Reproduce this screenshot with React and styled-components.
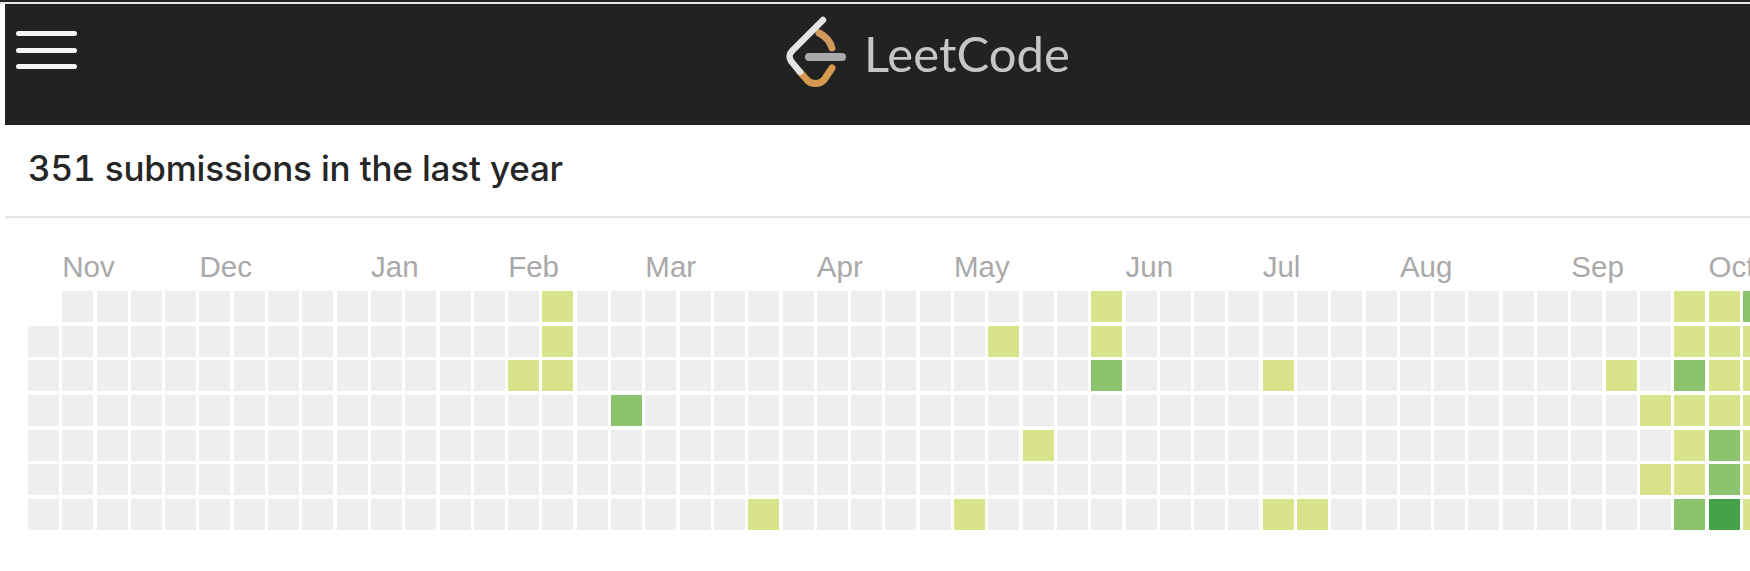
import React from "react";
import styled, { createGlobalStyle } from "styled-components";

const GlobalStyle = createGlobalStyle`
  html, body {
    margin: 0;
    padding: 0;
    background: #ffffff;
    overflow: hidden;
  }
`;

const Page = styled.div`
  width: 1750px;
  height: 571px;
  overflow: hidden;
  background: #fff;
  border-top: 2px solid #222;
  font-family: "Liberation Sans", Arial, sans-serif;
`;

const TopLine = styled.div`
  height: 2px;
  background: #e8e8e8;
`;

const Body = styled.div`
  padding-left: 5px;
`;

const Navbar = styled.header`
  height: 121px;
  background: #222222;
  display: flex;
  align-items: flex-start;
`;

const Burger = styled.button`
  display: flex;
  flex-direction: column;
  gap: 11.5px;
  width: 61px;
  margin: 27px 0 0 11px;
  padding: 0;
  border: 0;
  background: none;
`;

const BurgerBar = styled.span`
  display: block;
  height: 5px;
  border-radius: 3px;
  background: #f4f4f4;
`;

const Brand = styled.div`
  display: flex;
  align-items: center;
  gap: 16px;
  margin: 11px 0 0 705px;
`;

const BrandName = styled.span`
  font-family: Lato, sans-serif;
  font-weight: 400;
  font-size: 49px;
  line-height: 56px;
  color: #c6c6c6;
`;

const CardTitle = styled.h2`
  margin: 0;
  height: 93px;
  padding-left: 23px;
  box-sizing: border-box;
  border-bottom: 2px solid #e6e6e6;
  font-family: Inter, sans-serif;
  font-size: 35px;
  font-weight: 500;
  font-variant-numeric: tabular-nums;
  letter-spacing: -0.18px;
  line-height: 86px;
  color: #262626;
  white-space: nowrap;
`;

const Calendar = styled.section`
  padding: 31px 0 0 23px;
`;

const Months = styled.div`
  display: grid;
  grid-template-columns: repeat(53, 31px);
  column-gap: 3.3px;
  height: 42px;
`;

const Month = styled.span`
  grid-column-start: ${(p) => p.$col + 1};
  grid-row: 1;
  font-size: 29.5px;
  line-height: 35px;
  color: #a9a9a9;
  white-space: nowrap;
`;

const Weeks = styled.div`
  display: grid;
  grid-template-rows: repeat(7, 31px);
  grid-auto-flow: column;
  grid-auto-columns: 31px;
  column-gap: 3.3px;
  row-gap: 3.67px;
`;

const levelColors = ["#eeeeee", "#d8e38b", "#8cc46d", "#45a24a"];

const Day = styled.div`
  background: ${(p) => (p.$blank ? "transparent" : levelColors[p.$level])};
`;

const months = [
  ["Nov", 1],
  ["Dec", 5],
  ["Jan", 10],
  ["Feb", 14],
  ["Mar", 18],
  ["Apr", 23],
  ["May", 27],
  ["Jun", 32],
  ["Jul", 36],
  ["Aug", 40],
  ["Sep", 45],
  ["Oct", 49],
];

// week index -> levels by weekday row, anything not listed is empty
const activity = {
  14: { 2: 1 },
  15: { 0: 1, 1: 1, 2: 1 },
  17: { 3: 2 },
  21: { 6: 1 },
  27: { 6: 1 },
  28: { 1: 1 },
  29: { 4: 1 },
  31: { 0: 1, 1: 1, 2: 2 },
  36: { 2: 1, 6: 1 },
  37: { 6: 1 },
  46: { 2: 1 },
  47: { 3: 1, 5: 1 },
  48: { 0: 1, 1: 1, 2: 2, 3: 1, 4: 1, 5: 1, 6: 2 },
  49: { 0: 1, 1: 1, 2: 1, 3: 1, 4: 2, 5: 2, 6: 3 },
  50: { 0: 2, 1: 1, 2: 1, 3: 1, 4: 1, 5: 1, 6: 1 },
};

const days = [];
for (let week = 0; week < 51; week++) {
  for (let row = 0; row < 7; row++) {
    days.push({
      key: week + "-" + row,
      blank: week === 0 && row === 0,
      level: (activity[week] && activity[week][row]) || 0,
    });
  }
}

const Logo = () => (
  <svg width="66" height="76" viewBox="0 0 66 76" fill="none" strokeLinecap="round" strokeLinejoin="round">
    <path d="M27 42H60" stroke="#a9a9ab" strokeWidth="8" />
    <path d="M37 18C43 21 48 26 50 33" stroke="#d29a5a" strokeWidth="7" />
    <path d="M18 57L26 66C31 70 38 69 42 65L50 53" stroke="#d5994f" strokeWidth="7" />
    <path d="M41 5L10 36C7 39 7 43 9 46L18 57" stroke="#e4e4e4" strokeWidth="6.5" />
  </svg>
);

export default function App() {
  return (
    <Page>
      <GlobalStyle />
      <TopLine />
      <Body>
        <Navbar>
          <Burger aria-label="Menu">
            <BurgerBar />
            <BurgerBar />
            <BurgerBar />
          </Burger>
          <Brand>
            <Logo />
            <BrandName>LeetCode</BrandName>
          </Brand>
        </Navbar>
        <CardTitle>351 submissions in the last year</CardTitle>
        <Calendar>
          <Months>
            {months.map(([name, col]) => (
              <Month key={name} $col={col}>
                {name}
              </Month>
            ))}
          </Months>
          <Weeks>
            {days.map((d) => (
              <Day key={d.key} $blank={d.blank} $level={d.level} />
            ))}
          </Weeks>
        </Calendar>
      </Body>
    </Page>
  );
}
